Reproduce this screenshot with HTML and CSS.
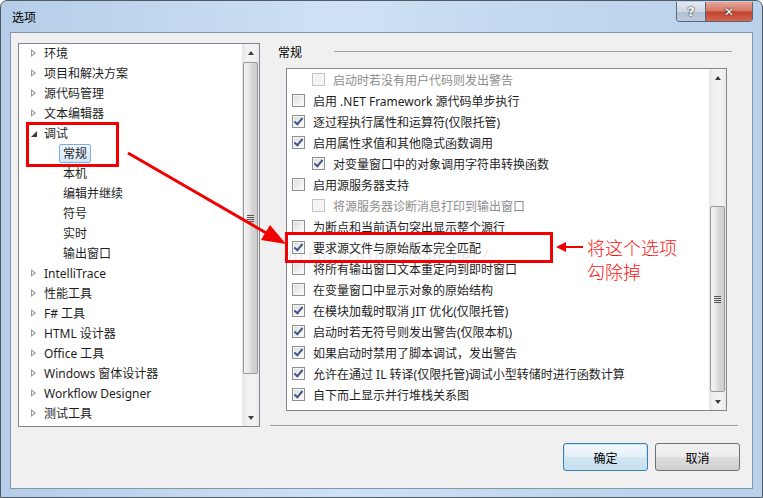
FILE: index.html
```html
<!doctype html>
<html>
<head>
  <meta charset="utf-8">
  <title>选项</title>
  <link rel="stylesheet" href="styles.css">
</head>
<body>
  <div class="window">
    <div class="titlebar">
      <span class="title">选项</span>
      <div class="caption-buttons">
        <span class="cap-btn help">?</span>
        <span class="cap-btn close">✕</span>
      </div>
    </div>

    <div class="client">
      <div class="main">
        <!-- Category tree -->
        <div class="tree">
          <ul class="tree-list">
            <li class="node"><i class="arrow"></i>环境</li>
            <li class="node"><i class="arrow"></i>项目和解决方案</li>
            <li class="node"><i class="arrow"></i>源代码管理</li>
            <li class="node"><i class="arrow"></i>文本编辑器</li>
            <li class="node open"><i class="arrow"></i>调试</li>
            <li class="node child"><span class="label selected">常规</span></li>
            <li class="node child"><span class="label">本机</span></li>
            <li class="node child"><span class="label">编辑并继续</span></li>
            <li class="node child"><span class="label">符号</span></li>
            <li class="node child"><span class="label">实时</span></li>
            <li class="node child"><span class="label">输出窗口</span></li>
            <li class="node"><i class="arrow"></i>IntelliTrace</li>
            <li class="node"><i class="arrow"></i>性能工具</li>
            <li class="node"><i class="arrow"></i>F# 工具</li>
            <li class="node"><i class="arrow"></i>HTML 设计器</li>
            <li class="node"><i class="arrow"></i>Office 工具</li>
            <li class="node"><i class="arrow"></i>Windows 窗体设计器</li>
            <li class="node"><i class="arrow"></i>Workflow Designer</li>
            <li class="node"><i class="arrow"></i>测试工具</li>
          </ul>
          <div class="scrollbar">
            <div class="sb-btn"><i class="sb-up"></i></div>
            <div class="sb-track"><div class="thumb thumb-tree"><i class="grip"></i></div></div>
            <div class="sb-btn"><i class="sb-down"></i></div>
          </div>
        </div>

        <!-- Option page -->
        <div class="page">
          <div class="page-header"><span>常规</span><span class="rule"></span></div>
          <div class="options">
            <ul class="option-list">
              <li class="opt sub disabled"><span class="cb"></span>启动时若没有用户代码则发出警告</li>
              <li class="opt"><span class="cb"></span>启用 .NET Framework 源代码单步执行</li>
              <li class="opt"><span class="cb checked"></span>逐过程执行属性和运算符(仅限托管)</li>
              <li class="opt"><span class="cb checked"></span>启用属性求值和其他隐式函数调用</li>
              <li class="opt sub"><span class="cb checked"></span>对变量窗口中的对象调用字符串转换函数</li>
              <li class="opt"><span class="cb"></span>启用源服务器支持</li>
              <li class="opt sub disabled"><span class="cb"></span>将源服务器诊断消息打印到输出窗口</li>
              <li class="opt"><span class="cb"></span>为断点和当前语句突出显示整个源行</li>
              <li class="opt"><span class="cb checked"></span>要求源文件与原始版本完全匹配</li>
              <li class="opt"><span class="cb"></span>将所有输出窗口文本重定向到即时窗口</li>
              <li class="opt"><span class="cb"></span>在变量窗口中显示对象的原始结构</li>
              <li class="opt"><span class="cb checked"></span>在模块加载时取消 JIT 优化(仅限托管)</li>
              <li class="opt"><span class="cb checked"></span>启动时若无符号则发出警告(仅限本机)</li>
              <li class="opt"><span class="cb checked"></span>如果启动时禁用了脚本调试，发出警告</li>
              <li class="opt"><span class="cb checked"></span>允许在通过 IL 转译(仅限托管)调试小型转储时进行函数计算</li>
              <li class="opt"><span class="cb checked"></span>自下而上显示并行堆栈关系图</li>
            </ul>
            <div class="scrollbar">
              <div class="sb-btn"><i class="sb-up"></i></div>
              <div class="sb-track"><div class="thumb thumb-opts"><i class="grip"></i></div></div>
              <div class="sb-btn"><i class="sb-down"></i></div>
            </div>
          </div>
        </div>
      </div>

      <div class="footer">
        <button class="btn default">确定</button>
        <button class="btn">取消</button>
      </div>
    </div>
  </div>

  <!-- Annotations drawn over the screenshot -->
  <div class="watermark">http://blog.csdn.net/</div>
  <div class="mark mark-tree"></div>
  <div class="mark mark-option"></div>
  <div class="note">将这个选项<br>勾除掉</div>
  <svg class="arrows" width="763" height="498" viewBox="0 0 763 498">
    <line x1="128" y1="153" x2="268" y2="234" stroke="#f00000" stroke-width="3"/>
    <polygon points="286,244 261,240 270,225" fill="#f00000"/>
    <line x1="583" y1="247" x2="563" y2="247" stroke="#f00000" stroke-width="2"/>
    <polygon points="556,247 566,242 566,252" fill="#f00000"/>
  </svg>
</body>
</html>
```

FILE: styles.css
```css
body {
  margin: 0;
  position: relative;
  width: 763px;
  height: 498px;
  overflow: hidden;
  background-color: #ffffff;
  font-family: "Noto Sans", "Noto Sans CJK SC", sans-serif;
  font-size: 12px;
  color: #000000;
}
ul {
  list-style: none;
  margin: 0;
  padding: 0;
}

/* Window frame */
.window {
  box-sizing: border-box;
  width: 763px;
  height: 498px;
  padding: 0 9px 8px 9px;
  border: 1px solid #4e5a68;
  border-radius: 7px 7px 0 0;
  background: linear-gradient(to right, #b5cde8 0%, #cfe2f5 45%, #c2d8ef 70%, #b9d1ea 100%);
}
.titlebar {
  height: 31px;
  display: flex;
  justify-content: space-between;
  align-items: flex-start;
}
.title {
  line-height: 31px;
  padding-left: 2px;
  font-family: "Noto Sans CJK SC", sans-serif;
}
.caption-buttons {
  display: flex;
  border: 1px solid #5b6574;
  border-top: none;
  border-radius: 0 0 4px 4px;
  overflow: hidden;
  margin-top: 1px;
}
.cap-btn {
  height: 19px;
  display: flex;
  align-items: center;
  justify-content: center;
  color: #ffffff;
  font-family: "DejaVu Sans", sans-serif;
  font-weight: bold;
  text-shadow: 0 0 2px #2a2a2a, 0 0 1px #2a2a2a;
}
.cap-btn.help {
  width: 28px;
  font-size: 13px;
  border-right: 1px solid #5b6574;
  background: linear-gradient(#e2e9f2 0%, #ccd7e4 50%, #b1c0d2 51%, #bccbdc 100%);
}
.cap-btn.close {
  width: 46px;
  font-size: 12px;
  background: linear-gradient(#e8a595 0%, #d57a69 45%, #c3432f 52%, #d36550 100%);
}

.client {
  box-sizing: border-box;
  height: 457px;
  border: 1px solid #8296ad;
  background-color: #f0f0f0;
}
.main {
  display: flex;
  padding: 10px 0 0 7px;
}

/* Tree */
.tree {
  box-sizing: border-box;
  width: 242px;
  height: 384px;
  border: 1px solid #828790;
  background-color: #ffffff;
  display: flex;
}
.tree-list {
  flex: 1;
  margin-top: -1px;
}
.node {
  height: 20px;
  display: flex;
  align-items: center;
  padding-left: 12px;
  color: #1e1e1e;
  white-space: nowrap;
}
.arrow {
  position: relative;
  width: 5px;
  height: 9px;
  margin-right: 8px;
}
.arrow::before,
.arrow::after {
  content: "";
  position: absolute;
  width: 0;
  height: 0;
}
.arrow::before {
  left: 0;
  top: 0;
  border-top: 4.5px solid transparent;
  border-bottom: 4.5px solid transparent;
  border-left: 5px solid #9a9a9a;
}
.arrow::after {
  left: 1px;
  top: 2px;
  border-top: 2.5px solid transparent;
  border-bottom: 2.5px solid transparent;
  border-left: 2.8px solid #ffffff;
}
.node.open .arrow::before {
  top: 2px;
  border: none;
  border-bottom: 6px solid #3a3a3a;
  border-left: 6px solid transparent;
}
.node.open .arrow::after {
  display: none;
}
.node.child {
  padding-left: 40px;
}
.label {
  border: 1px solid transparent;
  padding: 0 3px;
  line-height: 17px;
  border-radius: 2px;
}
.label.selected {
  border-color: #84acdd;
  background: linear-gradient(#eef5fd, #d5e6f9);
}

/* Scrollbars */
.scrollbar {
  width: 17px;
  display: flex;
  flex-direction: column;
  background: linear-gradient(to right, #e4e4e4 0%, #f1f1f1 25%, #f3f3f3 75%, #e8e8e8 100%);
}
.sb-btn {
  height: 17px;
  display: flex;
  align-items: center;
  justify-content: center;
}
.sb-up,
.sb-down {
  width: 0;
  height: 0;
  border-left: 3.5px solid transparent;
  border-right: 3.5px solid transparent;
}
.sb-up {
  border-bottom: 4px solid #404040;
}
.sb-down {
  border-top: 4px solid #404040;
}
.sb-track {
  flex: 1;
}
.thumb {
  box-sizing: border-box;
  margin: 0 1px;
  border: 1px solid #9a9a9a;
  border-radius: 2px;
  background: linear-gradient(to right, #f4f4f4 0%, #e8e8e8 40%, #d6d6d6 60%, #cdcdcd 100%);
  display: flex;
  align-items: center;
  justify-content: center;
}
.thumb-tree {
  margin-top: 1px;
  height: 312px;
}
.thumb-opts {
  margin-top: 120px;
  height: 186px;
}
.grip {
  width: 7px;
  height: 7px;
  background: repeating-linear-gradient(#555555 0, #555555 1px, transparent 1px, transparent 2px);
}

/* Option page */
.page {
  box-sizing: border-box;
  width: 468px;
  height: 383px;
  margin-left: 10px;
  border-bottom: 1px solid #a0a0a0;
}
.page-header {
  height: 16px;
  display: flex;
  align-items: center;
  padding: 0 6px 0 8px;
  font-family: "Noto Sans CJK SC", sans-serif;
}
.rule {
  flex: 1;
  height: 1px;
  margin-left: 32px;
  background-color: #a0a0a0;
}
.options {
  box-sizing: border-box;
  width: 441px;
  height: 343px;
  margin: 9px 0 0 16px;
  border: 1px solid #828790;
  background-color: #ffffff;
  display: flex;
}
.option-list {
  flex: 1;
}
.opt {
  height: 21px;
  display: flex;
  align-items: center;
  padding-left: 5px;
  white-space: nowrap;
  color: #1e1e1e;
}
.opt.sub {
  padding-left: 25px;
}
.opt.disabled {
  color: #8d8d8d;
}
.cb {
  position: relative;
  box-sizing: border-box;
  width: 13px;
  height: 13px;
  margin-right: 8px;
  border: 1px solid #8e8f8f;
  background: linear-gradient(135deg, #dcdcdc 0%, #f0f0f0 60%, #ffffff 100%);
  box-shadow: inset 0 0 0 1px #f7f7f7;
  flex-shrink: 0;
}
.opt.disabled .cb {
  border-color: #c4c4c4;
  background: #f4f4f4;
}
.cb.checked::after {
  content: "";
  position: absolute;
  left: 3px;
  top: 0;
  width: 3px;
  height: 7px;
  border: solid #43578a;
  border-width: 0 2px 2px 0;
  transform: rotate(40deg);
}

/* Dialog buttons */
.footer {
  display: flex;
  justify-content: flex-end;
  gap: 7px;
  padding: 16px 12px 0 0;
}
.btn {
  width: 85px;
  height: 28px;
  border: 1px solid #707070;
  border-radius: 3px;
  background: linear-gradient(#f2f2f2 0%, #ebebeb 50%, #dddddd 51%, #cfcfcf 100%);
  font-family: "Noto Sans CJK SC", sans-serif;
  font-size: 12px;
  color: #000000;
  padding: 0;
}
.btn.default {
  border-color: #3c7fb1;
  background: linear-gradient(#f3f9fc 0%, #e3f0f8 50%, #d3e7f3 51%, #c6deec 100%);
  box-shadow: inset 0 0 0 1px #c4e4f7;
}

/* Annotations */
.mark {
  position: absolute;
  box-sizing: border-box;
  border: 3px solid #f00000;
}
.mark-tree {
  left: 26px;
  top: 122px;
  width: 93px;
  height: 45px;
}
.mark-option {
  left: 285px;
  top: 232px;
  width: 268px;
  height: 31px;
}
.note {
  position: absolute;
  left: 587px;
  top: 235px;
  font-family: "Noto Sans CJK SC", sans-serif;
  font-size: 18px;
  line-height: 24px;
  color: #ff1010;
  font-weight: 300;
}
.watermark {
  position: absolute;
  left: 288px;
  top: 249px;
  font-family: "Liberation Mono", monospace;
  font-size: 16px;
  color: rgba(110, 110, 110, 0.16);
}
.arrows {
  position: absolute;
  left: 0;
  top: 0;
  pointer-events: none;
}
```
